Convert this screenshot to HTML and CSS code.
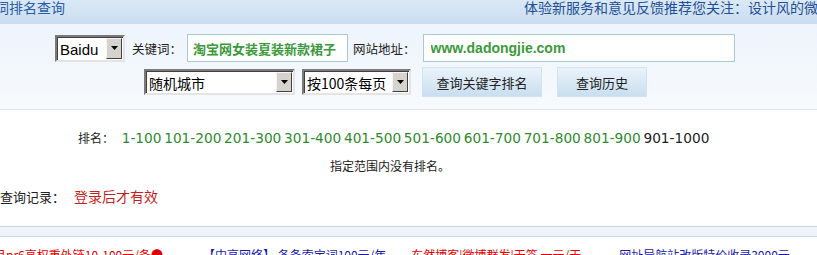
FILE: index.html
```html
<!DOCTYPE html>
<html lang="zh-CN">
<head>
    <meta charset="UTF-8">
    <title>关键词排名查询</title>
    <link rel="stylesheet" href="styles.css">
</head>
<body>
<div class="topbar">
    <span class="title">词排名查询</span>
    <span class="notice">体验新服务和意见反馈推荐您关注：设计风的微博</span>
</div>

<div class="search">
    <div class="row row-one">
        <div class="combo combo-engine">
            <span class="combo-text">Baidu</span>
            <span class="combo-arrow"><svg width="7" height="4" viewBox="0 0 7 4"><path d="M0 0h7L3.5 4z" fill="#000"/></svg></span>
        </div>
        <label class="label label-keyword">关键词：</label>
        <input class="field field-keyword" type="text" value="淘宝网女装夏装新款裙子">
        <label class="label label-site">网站地址：</label>
        <input class="field field-site" type="text" value="www.dadongjie.com">
    </div>
    <div class="row row-two">
        <div class="combo combo-city">
            <span class="combo-text">随机城市</span>
            <span class="combo-arrow"><svg width="7" height="4" viewBox="0 0 7 4"><path d="M0 0h7L3.5 4z" fill="#000"/></svg></span>
        </div>
        <div class="combo combo-page">
            <span class="combo-text">按100条每页</span>
            <span class="combo-arrow"><svg width="7" height="4" viewBox="0 0 7 4"><path d="M0 0h7L3.5 4z" fill="#000"/></svg></span>
        </div>
        <button class="btn btn-rank" type="button">查询关键字排名</button>
        <button class="btn btn-history" type="button">查询历史</button>
    </div>
</div>

<div class="result">
    <p class="pages">
        <span class="pages-label">排名：</span>
        <a href="#">1-100</a>
        <a href="#">101-200</a>
        <a href="#">201-300</a>
        <a href="#">301-400</a>
        <a href="#">401-500</a>
        <a href="#">501-600</a>
        <a href="#">601-700</a>
        <a href="#">701-800</a>
        <a href="#">801-900</a>
        <span class="current">901-1000</span>
    </p>
    <p class="empty">指定范围内没有排名。</p>
    <p class="history">查询记录：<span class="login-tip">登录后才有效</span></p>
</div>

<div class="band"></div>

<div class="ads">
    <a class="ad ad-red" href="#">月pr6高权重外链10-100元/条●</a>
    <a class="ad ad-blue" href="#">【中亨网络】 各条索宝词100元/年</a>
    <a class="ad ad-red" href="#">东然博客|微博群发|无签 一元/天</a>
    <a class="ad ad-blue" href="#">网址导航站改版特价收录3000元</a>
</div>
</body>
</html>
```

FILE: styles.css
```css
* {
    box-sizing: border-box;
}

body, p {
    margin: 0;
    padding: 0;
}

body {
    font-family: "Noto Sans CJK SC", "DejaVu Sans", sans-serif;
    font-size: 12px;
    color: #222;
    background: #fff;
    overflow: hidden;
    white-space: nowrap;
}

a {
    text-decoration: none;
}

/* Top bar */
.topbar {
    display: flex;
    height: 24px;
    align-items: flex-start;
    background: linear-gradient(#dbe9f6, #c9ddf0);
    font-size: 14px;
    line-height: 14px;
}

.title {
    flex: 0 0 526px;
    margin-left: -5px;
    color: #2a5ea8;
}

.notice {
    margin-left: 3px;
    color: #1f4f94;
}

/* Search form */
.search {
    height: 86px;
    padding-top: 10px;
    background: linear-gradient(#edf4fb, #f7fafd);
    border-bottom: 1px solid #dfe6ec;
}

.row {
    display: flex;
    align-items: center;
}

.row-one {
    height: 28px;
    padding-left: 55px;
}

.row-two {
    height: 30px;
    margin-top: 5px;
    padding-left: 144px;
}

.label {
    font-size: 12.5px;
    color: #222;
}

.label-keyword {
    margin: 0 5px 0 7px;
}

.label-site {
    margin: 0 7px 0 5px;
}

.field {
    height: 28px;
    padding: 0 5px;
    border: 1px solid #a9c9d6;
    background: #fff;
    color: #3c9a3c;
    font-weight: bold;
    outline: none;
}

.field-keyword {
    width: 161px;
    font-family: "Noto Sans CJK SC", sans-serif;
    font-size: 13px;
}

.field-site {
    width: 312px;
    padding-left: 7px;
    font-family: "Liberation Sans", Arial, sans-serif;
    font-size: 14px;
}

/* Old style drop downs */
.combo {
    display: flex;
    align-items: stretch;
    height: 26px;
    border: 2px solid;
    border-color: #7a7a7a #e4e4e4 #e4e4e4 #7a7a7a;
    box-shadow: inset 1px 1px 0 #404040;
    background: #fff;
    font-size: 14px;
}

.combo-text {
    flex: 1;
    padding: 2px 0 0 3px;
    line-height: 20px;
    color: #000;
}

.combo-engine {
    width: 70px;
    height: 27px;
}

.combo-engine .combo-text {
    font-family: "Liberation Sans", Arial, sans-serif;
    font-size: 15px;
    padding-top: 3px;
}

.combo-city {
    width: 151px;
}

.combo-page {
    width: 109px;
    margin-left: 7px;
}

.combo-arrow {
    display: flex;
    align-items: center;
    justify-content: center;
    width: 16px;
    margin: 1px 1px 1px 0;
    background: #d6d3ce;
    border: 1px solid;
    border-color: #f4f4f4 #404040 #404040 #f4f4f4;
}

/* Buttons */
.btn {
    height: 30px;
    border: 1px solid #d3e2ee;
    background: linear-gradient(#eaf3fb, #c9deef);
    color: #222;
    font-family: "Noto Sans CJK SC", sans-serif;
    font-size: 13px;
    cursor: pointer;
}

.btn-rank {
    width: 120px;
    margin-left: 11px;
}

.btn-history {
    width: 90px;
    margin-left: 15px;
}

/* Results */
.result {
    height: 116px;
}

.pages {
    padding: 18px 0 0 78px;
    line-height: 20px;
}

.pages-label {
    margin-right: 5px;
}

.pages a,
.pages .current {
    font-family: "DejaVu Sans", Verdana, sans-serif;
    font-size: 13.7px;
}

.pages a {
    color: #2f8a2f;
}

.pages .current {
    color: #222;
}

.empty {
    padding: 8px 0 0 330px;
    line-height: 20px;
}

.history {
    padding-top: 10px;
    font-size: 13px;
    line-height: 20px;
}

.login-tip {
    margin-left: 9px;
    font-size: 14px;
    color: #c41f1f;
}

/* Divider band */
.band {
    height: 11px;
    border-top: 1px solid #c6d7e4;
    border-bottom: 1px solid #c6d7e4;
    background: #eef4fa;
}

/* Ads */
.ads {
    display: flex;
    padding-top: 10px;
    font-size: 12px;
    line-height: 16px;
}

.ad:first-child {
    margin-left: -6px;
    margin-right: 40px;
}

.ad:nth-child(2) {
    margin-right: 25px;
}

.ad:nth-child(3) {
    margin-right: 38px;
}

.ad-red {
    color: #e00000;
}

.ad-blue {
    color: #1a1aa6;
}
```
